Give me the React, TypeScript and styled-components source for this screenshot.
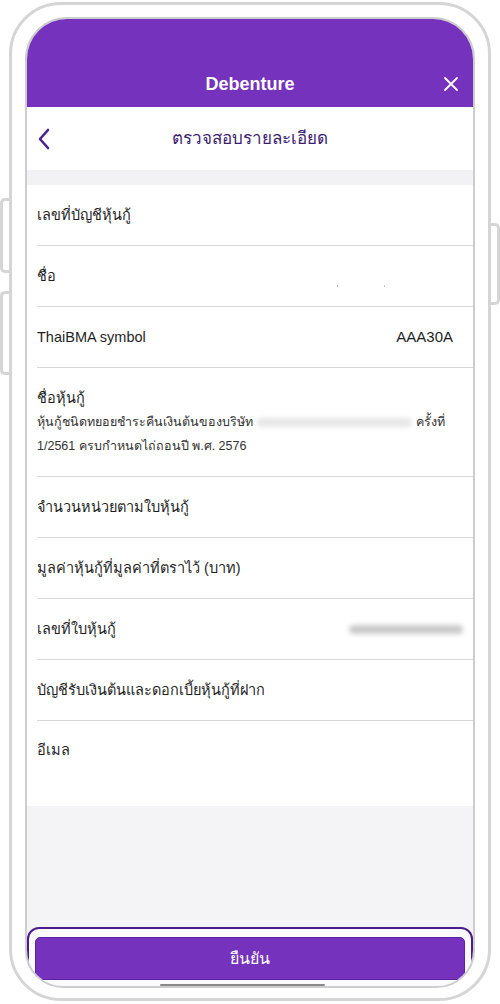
import React from "react";
import styled, { createGlobalStyle } from "styled-components";

const GlobalStyle = createGlobalStyle`
  html, body {
    margin: 0;
    padding: 0;
    background: #ffffff;
  }
  body {
    font-family: "Liberation Sans", "Noto Sans", "DejaVu Sans", sans-serif;
    color: #1f1f1f;
  }
`;

const Page = styled.div`
  width: 500px;
  height: 1004px;
  padding: 2px 9px 0;
  box-sizing: border-box;
`;

const Phone = styled.div`
  position: relative;
  width: 482px;
  height: 999px;
  box-sizing: border-box;
  border: 3px solid #d5d5d5;
  border-radius: 52px;
  padding: 12px 13px 10px;
  background: #ffffff;
`;

const SideButton = styled.div<{ $side: "left" | "right"; $top: number; $height: number }>`
  position: absolute;
  top: ${(p) => p.$top}px;
  height: ${(p) => p.$height}px;
  width: 9px;
  box-sizing: border-box;
  border: 3px solid #d5d5d5;
  background: #ffffff;
  ${(p) =>
    p.$side === "left"
      ? "left: -12px; border-right: none; border-radius: 5px 0 0 5px;"
      : "right: -12px; border-left: none; border-radius: 0 5px 5px 0;"}
`;

const Screen = styled.div`
  height: 100%;
  box-sizing: border-box;
  border: 2px solid #cdcdcd;
  border-radius: 42px 42px 38px 38px;
  overflow: hidden;
  display: flex;
  flex-direction: column;
  background: #f4f3f6;
`;

const Header = styled.div`
  height: 88px;
  flex-shrink: 0;
  background: #7432bd;
  display: flex;
  align-items: flex-end;
  justify-content: center;
  position: relative;
  padding-bottom: 8px;
  box-sizing: border-box;
`;

const HeaderTitle = styled.span`
  font-size: 18px;
  font-weight: 700;
  line-height: 30px;
  color: #ffffff;
`;

const CloseButton = styled.button`
  position: absolute;
  right: 14px;
  bottom: 15px;
  width: 16px;
  height: 16px;
  padding: 0;
  border: none;
  background: none;
  display: flex;
`;

const SubHeader = styled.div`
  height: 63px;
  flex-shrink: 0;
  background: #ffffff;
  display: grid;
  grid-template-columns: 40px 1fr 40px;
  align-items: center;
`;

const BackButton = styled.button`
  border: none;
  background: none;
  padding: 0 0 0 10px;
  display: flex;
  align-items: center;
`;

const SubTitle = styled.span`
  text-align: center;
  font-size: 17px;
  color: #3a1d70;
  line-height: 24px;
`;

const Band = styled.div`
  height: 15px;
  flex-shrink: 0;
  background: #f2f1f4;
`;

const List = styled.div`
  background: #ffffff;
  flex-shrink: 0;
`;

const Row = styled.div<{ $height?: number; $last?: boolean }>`
  margin-left: 10px;
  padding-right: 20px;
  min-height: ${(p) => p.$height ?? 60}px;
  display: flex;
  align-items: ${(p) => (p.$last ? "flex-start" : "center")};
  justify-content: space-between;
  border-bottom: ${(p) => (p.$last ? "none" : "1px solid #d8d8d8")};
  padding-top: ${(p) => (p.$last ? "17px" : "0")};
  box-sizing: ${(p) => (p.$last ? "border-box" : "content-box")};
`;

const BlockRow = styled.div`
  margin-left: 10px;
  padding: 18px 20px 18px 0;
  border-bottom: 1px solid #d8d8d8;
  display: flex;
  flex-direction: column;
`;

const Label = styled.span`
  font-size: 14.5px;
  line-height: 24px;
  color: #1f1f1f;
`;

const Value = styled.span`
  font-size: 15px;
  line-height: 24px;
  color: #1f1f1f;
`;

const Detail = styled.div`
  font-size: 12.5px;
  line-height: 24px;
  color: #333333;
`;

const Blurred = styled.span<{ $width: number; $shift?: number }>`
  display: inline-block;
  width: ${(p) => p.$width}px;
  height: 9px;
  margin-right: ${(p) => p.$shift ?? 0}px;
  border-radius: 5px;
  background: #c9c9c9;
  filter: blur(2.5px);
  vertical-align: middle;
`;

const SoftBlur = styled(Blurred)`
  background: #e6e6e6;
  margin: 0 4px;
`;

const Dots = styled.span`
  display: flex;
  gap: 46px;
  margin-top: 20px;
  margin-right: 68px;
`;

const Dot = styled.span`
  width: 1px;
  height: 2px;
  background: #c4c4c4;
`;

const Filler = styled.div`
  flex: 1;
  background: #f4f3f6;
`;

const Footer = styled.div`
  flex-shrink: 0;
  margin: 0 0 -4px;
`;

const Highlight = styled.div`
  position: relative;
  border: 2px solid #4b1c8e;
  border-radius: 12px;
  padding: 8px 6px 8px;
  background: #fafafc;
`;

const ConfirmButton = styled.button`
  width: 100%;
  height: 43px;
  border: 1px solid #5b22a6;
  border-radius: 5px;
  background: #7432bd;
  color: #ffffff;
  font-family: inherit;
  font-size: 16px;
`;

const HomeIndicator = styled.div`
  position: absolute;
  left: 50%;
  bottom: 2px;
  width: 165px;
  height: 2px;
  margin-left: -90px;
  border-radius: 2px;
  background: #8a8a8a;
`;

const App: React.FC = () => {
  return (
    <>
      <GlobalStyle />
      <Page>
        <Phone>
          <SideButton $side="left" $top={193} $height={75} />
          <SideButton $side="left" $top={286} $height={84} />
          <SideButton $side="right" $top={218} $height={82} />
          <Screen>
            <Header>
              <HeaderTitle>Debenture</HeaderTitle>
              <CloseButton aria-label="close">
                <svg width="16" height="16" viewBox="0 0 16 16">
                  <path d="M2 2 L14 14 M14 2 L2 14" stroke="#ffffff" strokeWidth="1.8" strokeLinecap="round" />
                </svg>
              </CloseButton>
            </Header>
            <SubHeader>
              <BackButton aria-label="back">
                <svg width="14" height="22" viewBox="0 0 14 22">
                  <path d="M11 2 L3 11 L11 20" fill="none" stroke="#4a2391" strokeWidth="2.6" strokeLinecap="round" strokeLinejoin="round" />
                </svg>
              </BackButton>
              <SubTitle>ตรวจสอบรายละเอียด</SubTitle>
              <span />
            </SubHeader>
            <Band />
            <List>
              <Row>
                <Label>เลขที่บัญชีหุ้นกู้</Label>
              </Row>
              <Row>
                <Label>ชื่อ</Label>
                <Dots>
                  <Dot />
                  <Dot />
                </Dots>
              </Row>
              <Row>
                <Label>ThaiBMA symbol</Label>
                <Value>AAA30A</Value>
              </Row>
              <BlockRow>
                <Label>ชื่อหุ้นกู้</Label>
                <Detail>
                  หุ้นกู้ชนิดทยอยชำระคืนเงินต้นของบริษัท
                  <SoftBlur $width={155} />
                  ครั้งที่
                </Detail>
                <Detail>1/2561 ครบกำหนดไถ่ถอนปี พ.ศ. 2576</Detail>
              </BlockRow>
              <Row>
                <Label>จำนวนหน่วยตามใบหุ้นกู้</Label>
              </Row>
              <Row>
                <Label>มูลค่าหุ้นกู้ที่มูลค่าที่ตราไว้ (บาท)</Label>
              </Row>
              <Row>
                <Label>เลขที่ใบหุ้นกู้</Label>
                <Blurred $width={114} $shift={-10} />
              </Row>
              <Row>
                <Label>บัญชีรับเงินต้นและดอกเบี้ยหุ้นกู้ที่ฝาก</Label>
              </Row>
              <Row $height={85} $last>
                <Label>อีเมล</Label>
              </Row>
            </List>
            <Filler />
            <Footer>
              <Highlight>
                <ConfirmButton>ยืนยัน</ConfirmButton>
                <HomeIndicator />
              </Highlight>
            </Footer>
          </Screen>
        </Phone>
      </Page>
    </>
  );
};

export default App;
